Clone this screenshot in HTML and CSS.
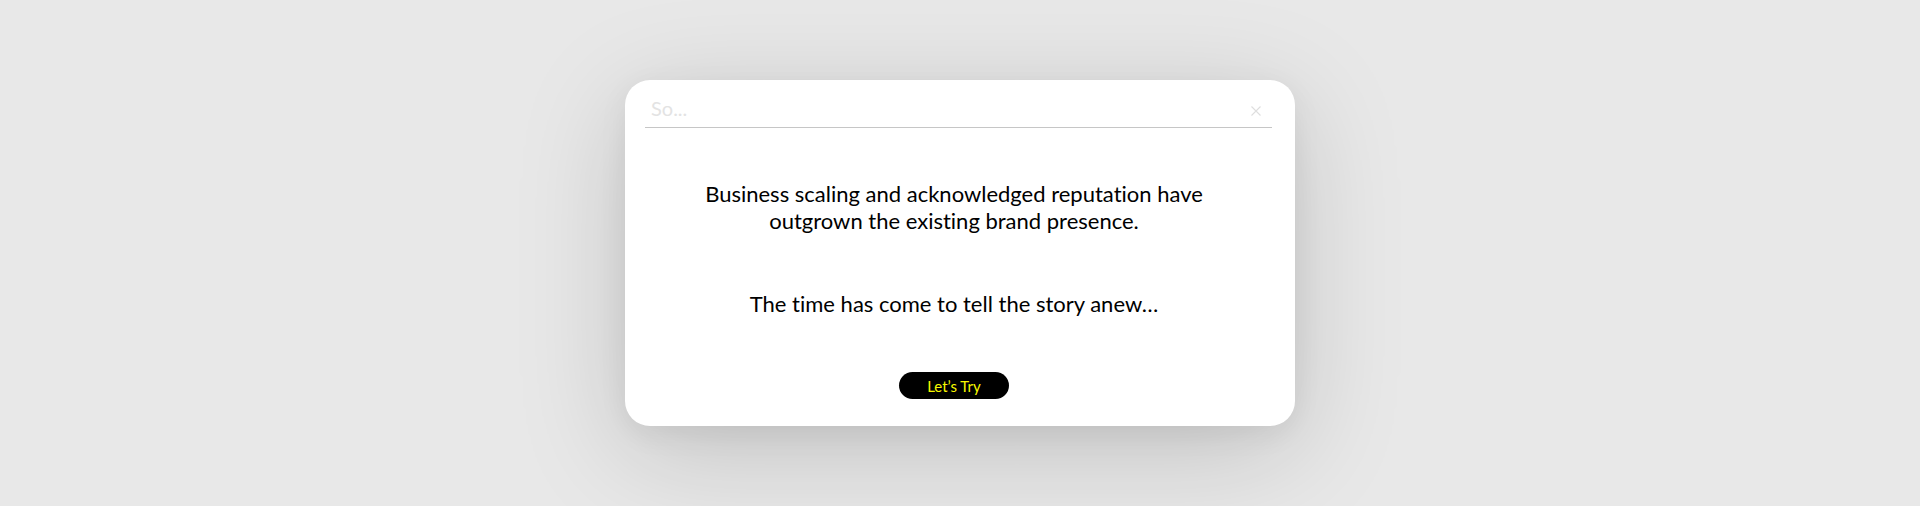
FILE: index.html
```html
<!DOCTYPE html>
<html lang="en">
<head>
    <meta charset="UTF-8">
    <meta name="viewport" content="width=device-width, initial-scale=1.0">
    <title>So...</title>
    <link rel="stylesheet" href="styles.css">
</head>
<body>
    <div class="modal">
        <div class="modal-head">
            <span class="modal-title">So...</span>
            <svg class="close" width="10" height="10" viewBox="0 0 10 10">
                <path d="M0.5 0.5 L9.5 9.5 M9.5 0.5 L0.5 9.5" stroke="#dedede" stroke-width="1.1" fill="none"/>
            </svg>
        </div>

        <div class="modal-body">
            <p class="lead">Business scaling and acknowledged reputation have<br>outgrown the existing brand presence.</p>
            <p class="story">The time has come to tell the story anew…</p>
            <button class="try">Let’s Try</button>
        </div>
    </div>
</body>
</html>
```

FILE: styles.css
```css
html, body {
    height: 100%;
}
body {
    margin: 0;
    background-color: #e8e8e8;
    font-family: Lato, "Open Sans", sans-serif;
    font-variant-ligatures: no-common-ligatures;
    display: flex;
    align-items: center;
    justify-content: center;
}
.modal {
    width: 670px;
    height: 346px;
    box-sizing: border-box;
    padding: 0 23px 0 20px;
    background-color: #fff;
    border-radius: 25px;
    box-shadow: 0 24px 110px rgba(0, 0, 0, 0.17), 0 8px 30px rgba(0, 0, 0, 0.06);
    display: flex;
    flex-direction: column;
}
.modal-head {
    display: flex;
    justify-content: space-between;
    align-items: center;
    padding: 16px 11px 7px 6px;
    border-bottom: 1px solid #c6c6c6;
}
.modal-title {
    font-size: 20px;
    line-height: 24px;
    color: #e3e3e3;
}
.close {
    margin-top: 5px;
}
.modal-body {
    display: flex;
    flex-direction: column;
    align-items: center;
    padding-right: 9px;
    text-align: center;
    color: #000;
}
.modal-body p {
    margin: 0;
    font-size: 22px;
    line-height: 27.4px;
}
.lead {
    margin-top: 52px !important;
}
.story {
    margin-top: 55.2px !important;
}
.try {
    margin-top: 54.8px;
    width: 110px;
    height: 27px;
    padding: 0;
    border: none;
    border-radius: 14px;
    background-color: #000;
    color: #f8f800;
    font-family: Lato, "Open Sans", sans-serif;
    font-variant-ligatures: no-common-ligatures;
    font-size: 15px;
    cursor: pointer;
}
```
